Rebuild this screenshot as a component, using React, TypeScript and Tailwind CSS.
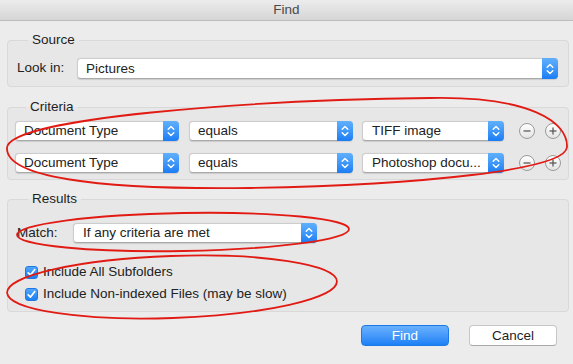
import React from "react";

const Stepper = () => (
  <div className="w-[16px] self-stretch -my-px -mr-px rounded-r-[4px] bg-gradient-to-b from-[#5fb0fc] to-[#1a7df3] flex items-center justify-center shrink-0">
    <svg width="16" height="20" viewBox="0 0 16 20" fill="none">
      <path d="M5.2 8.2 L8 5.4 L10.8 8.2" stroke="white" strokeWidth="1.4" strokeLinecap="round" strokeLinejoin="round" />
      <path d="M5.2 11.8 L8 14.6 L10.8 11.8" stroke="white" strokeWidth="1.4" strokeLinecap="round" strokeLinejoin="round" />
    </svg>
  </div>
);

const Select = ({ text, className = "", pl = "pl-[8px]" }: { text: string; className?: string; pl?: string }) => (
  <div className={`h-[20px] flex items-center bg-white rounded-[4px] border border-[#cdcdcd] border-b-[#a9a9a9] shadow-[0_0.5px_1px_rgba(0,0,0,0.12)] ${className}`}>
    <div className={`flex-1 min-w-0 ${pl} text-[#222] leading-[18px] whitespace-nowrap overflow-hidden`}>{text}</div>
    <Stepper />
  </div>
);

const RoundBtn = ({ plus }: { plus?: boolean }) => (
  <div className="w-[16px] h-[16px] rounded-full border border-[#9a9a9a] bg-gradient-to-b from-white to-[#e4e4e4] flex items-center justify-center shrink-0">
    <svg width="14" height="14" viewBox="0 0 14 14">
      <path d="M3.5 7 H10.5" stroke="#5a5a5a" strokeWidth="1.3" />
      {plus && <path d="M7 3.5 V10.5" stroke="#5a5a5a" strokeWidth="1.3" />}
    </svg>
  </div>
);

const Check = () => (
  <div className="w-[13px] h-[13px] rounded-[3px] bg-gradient-to-b from-[#4fa6fb] to-[#1a7ff3] border border-[#1f78e0] flex items-center justify-center shrink-0">
    <svg width="11" height="11" viewBox="0 0 11 11" fill="none">
      <path d="M2.2 5.8 L4.5 8.1 L8.8 2.6" stroke="white" strokeWidth="1.7" strokeLinecap="round" strokeLinejoin="round" />
    </svg>
  </div>
);

const Group = ({ title, children, className = "" }: { title: string; children: React.ReactNode; className?: string }) => (
  <fieldset className={`border border-[#d9d9d9] rounded-[4px] bg-[#e7e7e7] ${className}`}>
    <legend className="ml-[11px] px-[4px] leading-[16px] text-[#1e1e1e]">{title}</legend>
    {children}
  </fieldset>
);

export default function App() {
  return (
    <div className="relative w-[573px] h-[364px] bg-[#ececec] font-['Liberation_Sans',Arial,sans-serif] text-[13.5px] text-[#222] overflow-hidden">
      <div className="h-[21px] bg-gradient-to-b from-[#ececec] to-[#d6d6d6] border-b border-[#bdbdbd] flex items-center justify-center text-[#4a4a4a] leading-[20px]">
        Find
      </div>
      <div className="pl-[7px] pr-[4px]">
        <Group title="Source" className="mt-[11px] pt-[10px] pb-[7px] pl-[9px] pr-[10px]">
          <div className="flex items-center">
            <div className="w-[60px]">Look in:</div>
            <Select text="Pictures" className="flex-1 h-[21px]" />
          </div>
        </Group>
        <Group title="Criteria" className="mt-[12px] pt-[6px] pb-[6px] pl-[7px]">
          <div className="flex flex-col gap-[12px]">
            {["TIFF image", "Photoshop docu..."].map((t) => (
              <div key={t} className="flex items-center">
                <Select text="Document Type" className="w-[164px]" />
                <Select text="equals" className="w-[164px] ml-[10px]" />
                <Select text={t} className="w-[142px] ml-[9px]" pl="pl-[9px]" />
                <div className="ml-[15px] flex gap-[10px]">
                  <RoundBtn />
                  <RoundBtn plus />
                </div>
              </div>
            ))}
          </div>
        </Group>
        <Group title="Results" className="mt-[11px] pt-[16px] pb-[9px] pl-[9px]">
          <div className="flex items-center">
            <div className="w-[56px]">Match:</div>
            <Select text="If any criteria are met" className="w-[244px]" pl="pl-[9px]" />
          </div>
          <div className="mt-[21px] pl-[8px] flex flex-col gap-[6px]">
            <div className="flex items-center gap-[5px] h-[16px]">
              <Check />
              <span>Include All Subfolders</span>
            </div>
            <div className="flex items-center gap-[5px] h-[16px]">
              <Check />
              <span>Include Non-indexed Files (may be slow)</span>
            </div>
          </div>
        </Group>
      </div>
      <div className="mt-[13px] flex justify-end gap-[20px] pr-[16px]">
        <div className="w-[88px] h-[21px] rounded-[4px] bg-gradient-to-b from-[#69b1fd] to-[#1a80f6] border border-[#1c7ae8] text-white flex items-center justify-center leading-[18px]">
          Find
        </div>
        <div className="w-[88px] h-[21px] rounded-[4px] bg-white border border-[#c6c6c6] border-b-[#a8a8a8] flex items-center justify-center leading-[18px] text-[#1e1e1e]">
          Cancel
        </div>
      </div>
      <svg className="absolute inset-0 pointer-events-none" width="573" height="364" viewBox="0 0 573 364" fill="none">
        <path
          d="M7 148 C 8 118, 250 100, 430 98 C 530 96, 568 122, 567 147 C 566 170, 420 185, 250 188 C 90 190, 6 176, 7 148 Z"
          stroke="#e11b14"
          strokeWidth="1.8"
        />
        <ellipse cx="183" cy="232" rx="166" ry="19" transform="rotate(-1 183 232)" stroke="#e11b14" strokeWidth="1.8" />
        <ellipse cx="172" cy="287" rx="165" ry="31" transform="rotate(-2 172 287)" stroke="#e11b14" strokeWidth="1.8" />
      </svg>
    </div>
  );
}
